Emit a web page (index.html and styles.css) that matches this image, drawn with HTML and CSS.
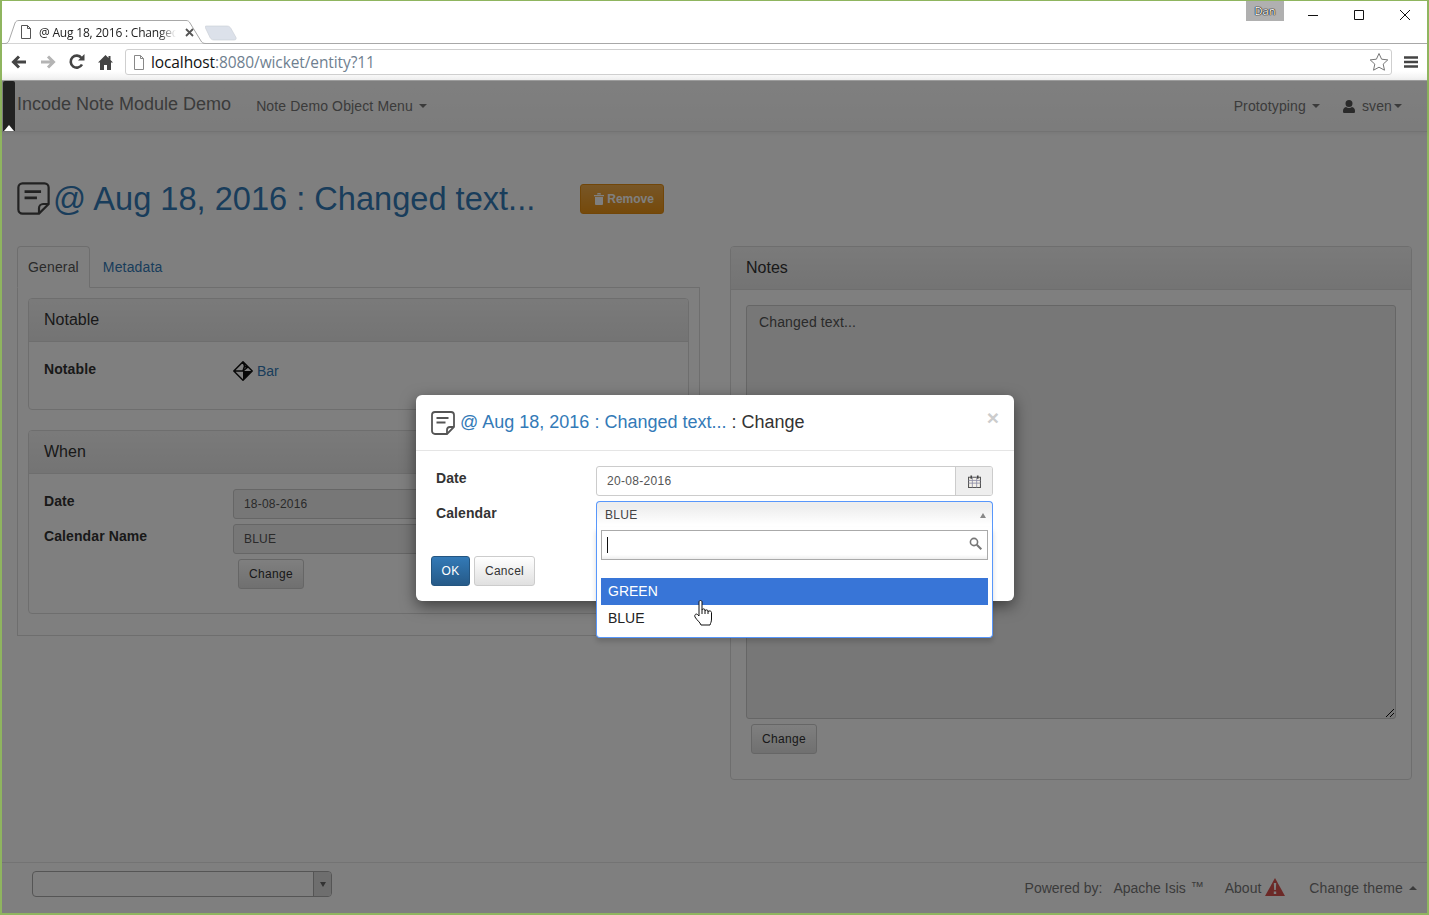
FILE: index.html
```html
<!DOCTYPE html>
<html lang="en">
<head>
<meta charset="utf-8">
<title>@ Aug 18, 2016 : Changed text...</title>
<link rel="stylesheet" href="styles.css">
</head>
<body>
<div class="window">
  <header class="chrome">
    <div class="tabstrip">
      <div class="browser-tab">
        <svg class="tab-shape" width="204" height="24" viewBox="0 0 204 24"><path d="M0 23.500h3c2 0 3-1 4-3L13 3c.7-1.700 2-2.500 4-2.500h167c2 0 3 .8 4 2.500l11 18c1 1.700 2 2.500 5 2.500" fill="#fff" stroke="#a8a8a8"/></svg>
        <svg class="page-icon" width="12" height="14" viewBox="0 0 12 14"><path d="M1.500.5h6l3 3v10h-9z M7.500.5v3h3" fill="#fff" stroke="#555"/></svg>
        <span class="tab-title">@ Aug 18, 2016 : Changed text...</span>
        <svg class="tab-close" width="9" height="9" viewBox="0 0 9 9"><path d="M1 1l7 7M8 1L1 8" stroke="#555" stroke-width="1.800"/></svg>
      </div>
      <svg class="new-tab" width="32" height="16" viewBox="0 0 32 16"><path d="M1 1h21c2 0 3 1 4 2.500l5 9c.5 1.500 0 2.500-2 2.500H9c-2 0-3-1-4-2.500L.5 3C0 2 0 1 1 1z" fill="#dce1ea" stroke="#c8ccd4" stroke-width=".6"/></svg>
      <div class="win-controls">
        <span class="user-badge">Dan</span>
        <span class="win-btn"><svg width="12" height="12" viewBox="0 0 12 12"><path d="M1 6.500h10" stroke="#111"/></svg></span>
        <span class="win-btn"><svg width="12" height="12" viewBox="0 0 12 12"><path d="M1.500 1.500h9v9h-9z" fill="none" stroke="#111"/></svg></span>
        <span class="win-btn"><svg width="12" height="12" viewBox="0 0 12 12"><path d="M1 1l10 10M11 1L1 11" stroke="#111"/></svg></span>
      </div>
    </div>
    <div class="toolbar">
      <svg class="tool" width="16" height="14" viewBox="0 0 16 14"><path d="M15 7H3M8 1.500L2.500 7 8 12.500" fill="none" stroke="#444" stroke-width="3"/></svg>
      <svg class="tool" width="16" height="14" viewBox="0 0 16 14"><path d="M1 7h12M8 1.500L13.500 7 8 12.500" fill="none" stroke="#b4b4b4" stroke-width="3"/></svg>
      <svg class="tool" width="16" height="16" viewBox="0 0 16 16"><path d="M13 10.500A6 6 0 1 1 12.500 4" fill="none" stroke="#444" stroke-width="2.600"/><path d="M9 6.500h6.500V0z" fill="#444"/></svg>
      <svg class="tool" width="15" height="15" viewBox="0 0 15 15"><path d="M7.500 0L0 7.500h2V15h4v-5h3v5h4V7.500h2L12.500 5V1h-2v2z" fill="#444"/></svg>
      <div class="omnibox">
        <svg width="12" height="15" viewBox="0 0 12 15"><path d="M1.500.5h6l3 3v11h-9z M7.500.5v3h3" fill="#fff" stroke="#888"/></svg>
        <span class="url"><span class="host">localhost</span>:8080/wicket/entity?11</span>
        <svg class="star" width="20" height="20" viewBox="0 0 20 20"><path d="M10 1.500l2.600 5.700 6.200.7-4.600 4.200 1.300 6.100L10 15.200l-5.500 3 1.300-6.100L1.200 7.900l6.200-.7z" fill="#fff" stroke="#777"/></svg>
      </div>
      <svg class="menu-icon" width="14" height="12" viewBox="0 0 14 12"><path d="M0 1.500h14M0 6h14M0 10.500h14" stroke="#444" stroke-width="2.400"/></svg>
    </div>
  </header>

  <div class="page">
    <nav class="navbar">
      <a class="brand">Incode Note Module Demo</a>
      <a class="nav-link">Note Demo Object Menu <i class="caret"></i></a>
      <div class="nav-right">
        <a class="nav-link">Prototyping <i class="caret"></i></a>
        <a class="nav-link user"><svg width="12" height="13" viewBox="0 0 12 13"><path d="M6 0a3.200 3.200 0 0 1 0 7 3.200 3.200 0 0 1 0-7zM1 13c-1 0-1-1-1-2 0-2 1-3.500 3-4 1.800 1.200 4.200 1.200 6 0 2 .5 3 2 3 4 0 1 0 2-1 2z" fill="#555"/></svg> sven<i class="caret caret-tight"></i></a>
      </div>
    </nav>

    <main class="content">
      <div class="title-row">
        <svg class="note-icon" width="33" height="33" viewBox="0 0 24 24"><path d="M4 1h16a3 3 0 0 1 3 3v12l-7 7H4a3 3 0 0 1-3-3V4a3 3 0 0 1 3-3z" fill="none" stroke="#444" stroke-width="1.600"/><path d="M16 23v-4a3 3 0 0 1 3-3h4" fill="none" stroke="#444" stroke-width="1.600"/><path d="M5.500 7h12M5.500 11.500h9" stroke="#444" stroke-width="2"/></svg>
        <h1 class="title">@ Aug 18, 2016 : Changed text...</h1>
        <button class="btn btn-warning"><svg width="10" height="12" viewBox="0 0 10 12"><path d="M0 2h10v1.300H0zM3.500 0h3l.5 1.500H3zM1 4h8v7a1 1 0 0 1-1 1H2a1 1 0 0 1-1-1z" fill="#fff"/></svg> Remove</button>
      </div>

      <div class="columns">
        <section class="left-col">
          <div class="tabs">
            <a class="tab active">General</a>
            <a class="tab">Metadata</a>
          </div>
          <div class="tab-content">
            <div class="panel">
              <div class="panel-heading">Notable</div>
              <div class="panel-body notable-body">
                <div class="field">
                  <label class="field-label">Notable</label>
                  <a class="value-link"><svg width="20" height="20" viewBox="0 0 20 20"><path d="M10 10h9.200L10 19.200z" fill="#111"/><path d="M10 .8L19.200 10 10 19.200.8 10z M.8 10H10M10 .8l1.500 4.200-1.500 5M11.500 5l2.800 1.500-4.300 3.500" fill="none" stroke="#111" stroke-width="1.500" stroke-linejoin="round"/></svg> Bar</a>
                </div>
              </div>
            </div>
            <div class="panel">
              <div class="panel-heading">When</div>
              <div class="panel-body when-body">
                <div class="field field-input">
                  <label class="field-label">Date</label>
                  <input class="input" value="18-08-2016" readonly>
                </div>
                <div class="field field-input">
                  <label class="field-label">Calendar Name</label>
                  <input class="input" value="BLUE" readonly>
                </div>
                <button class="btn btn-default btn-change">Change</button>
              </div>
            </div>
          </div>
        </section>
        <section class="panel notes-panel">
          <div class="panel-heading">Notes</div>
          <div class="panel-body notes-body">
            <div class="textarea">Changed text...<svg class="resize" width="8" height="8" viewBox="0 0 8 8"><path d="M8 0L0 8M8 4L4 8" stroke="#111"/></svg></div>
            <button class="btn btn-default btn-change">Change</button>
          </div>
        </section>
      </div>
    </main>

    <footer class="footer">
      <div class="footer-select"><span class="footer-arrow"><i class="caret"></i></span></div>
      <div class="footer-right">
        <span class="powered">Powered by:</span>
        <a class="foot-link isis">Apache Isis <sup>™</sup></a>
        <a class="foot-link about">About <svg width="20" height="18" viewBox="0 0 20 18"><path d="M10 0l10 18H0z" fill="#d9534f"/><path d="M8.800 5h2.400l-.4 7H9.200zM8.800 13.500h2.400V16H8.800z" fill="#fff"/></svg></a>
        <a class="foot-link theme">Change theme <i class="caret caret-up"></i></a>
      </div>
    </footer>

    <div class="backdrop"></div>
    <div class="side-handle"><i class="handle-tip"></i></div>
  </div>

  <div class="modal">
    <div class="modal-header">
      <svg class="modal-note" width="24" height="24" viewBox="0 0 24 24"><path d="M4 1h16a3 3 0 0 1 3 3v12l-7 7H4a3 3 0 0 1-3-3V4a3 3 0 0 1 3-3z" fill="none" stroke="#555" stroke-width="1.800"/><path d="M16 23v-4a3 3 0 0 1 3-3h4" fill="none" stroke="#555" stroke-width="1.800"/><path d="M5.500 7h12M5.500 11.500h9" stroke="#555" stroke-width="2"/></svg>
      <h4 class="modal-title"><a>@ Aug 18, 2016 : Changed text...</a> : Change</h4>
      <span class="close">×</span>
    </div>
    <div class="modal-body">
      <div class="modal-field">
        <label class="field-label">Date</label>
        <div class="input-group">
          <span class="group-value">20-08-2016</span>
          <span class="addon"><svg width="13" height="13" viewBox="0 0 12 12"><path d="M.5 2h11v9.500H.5z" fill="#f4f1ea" stroke="#555"/><path d="M.5 5h11M.5 7.500h11M4 2v9.500M8 2v9.500" stroke="#8f8fa8" stroke-width=".8"/><path d="M3 .5v3M9 .5v3" stroke="#444" stroke-width="1.500"/></svg></span>
        </div>
      </div>
      <div class="modal-field">
        <label class="field-label">Calendar</label>
        <div class="select-open">BLUE<i class="select-arrow"></i></div>
      </div>
    </div>
    <div class="modal-footer">
      <button class="btn btn-primary">OK</button>
      <button class="btn btn-default">Cancel</button>
    </div>
  </div>

  <div class="dropdown">
    <div class="search">
      <i class="text-cursor"></i>
      <svg width="13" height="13" viewBox="0 0 13 13"><circle cx="5" cy="5" r="3.600" fill="none" stroke="#777" stroke-width="1.600"/><path d="M7.800 7.800l4.500 4.500" stroke="#777" stroke-width="2"/></svg>
    </div>
    <ul class="options">
      <li class="option highlighted">GREEN</li>
      <li class="option">BLUE</li>
    </ul>
  </div>

  <svg class="hand" width="19" height="26" viewBox="0 0 19 26"><path d="M5 14V2C5 0 8 0 8 2v8c0-1.500 3-1.500 3 0v1c0-1.500 3-1.500 3 0v1c0-1.500 3.500-1.500 3.500.5V19c0 3-1 4-1.500 6H7c-1-3-4-4.500-6-8-1-2.500 1.500-4 3-2l1 1z" fill="#fff" stroke="#111" stroke-linejoin="round"/><path d="M8 10v4M11 11v3M14 12v2" stroke="#111" fill="none"/></svg>
</div>
</body>
</html>
```

FILE: styles.css
```css
* { box-sizing: border-box; }
html, body { margin: 0; height: 100%; overflow: hidden; }
body {
  font-family: "Liberation Sans", Arial, sans-serif;
  font-size: 14px;
  color: #333;
  background: #fff;
}
a { color: inherit; text-decoration: none; }
h1, h4 { margin: 0; font-weight: 400; }
.window {
  position: relative;
  width: 1429px;
  height: 915px;
  display: flex;
  flex-direction: column;
  border: 2px solid #8fb55f;
  border-top-width: 1px;
}

/* browser chrome */
.chrome { flex: none; height: 80px; background: #fff; }
.tabstrip { height: 43px; display: flex; align-items: flex-end; border-bottom: 1px solid #a8a8a8; position: relative; }
.browser-tab {
  position: relative;
  width: 204px;
  height: 24px;
  margin-bottom: -1px;
  display: flex;
  align-items: center;
  padding-left: 18px;
  flex: none;
}
.tab-shape { position: absolute; left: 0; top: 0; }
.page-icon { position: relative; margin-right: 7px; }
.tab-title {
  position: relative;
  width: 137px;
  overflow: hidden;
  white-space: nowrap;
  font: 12px "Open Sans", sans-serif;
  letter-spacing: -.2px;
  color: #222;
  -webkit-mask-image: linear-gradient(90deg, #000 88%, transparent);
  mask-image: linear-gradient(90deg, #000 88%, transparent);
}
.tab-close { position: relative; margin-left: 9px; }
.new-tab { flex: none; margin: 0 0 2px -1px; }
.win-controls { margin-left: auto; margin-right: -1px; align-self: flex-start; display: flex; align-items: flex-start; }
.user-badge {
  width: 38px;
  height: 20px;
  margin-right: 6px;
  background: #b0b0b0;
  color: #fff;
  font: 11px "Open Sans", sans-serif;
  text-align: center;
  line-height: 19px;
  text-shadow: 0 0 1px #000, 0 0 1px #000, 0 0 1px #000;
}
.win-btn { width: 46px; height: 28px; display: flex; align-items: center; justify-content: center; }
.toolbar {
  height: 37px;
  display: flex;
  align-items: center;
  background: linear-gradient(#fff 75%, #efefef);
  padding: 0 9px 0 9px;
  border-bottom: 1px solid #a0a0a0;
}
.tool { flex: none; margin-right: 13px; }
.omnibox {
  flex: 1;
  height: 26px;
  margin: 0 12px 0 -1px;
  display: flex;
  align-items: center;
  padding: 0 0 0 7px;
  background: #fff;
  border: 1px solid #cfcfcf;
  border-radius: 3px;
}
.url { font: 15.500px "Open Sans", sans-serif; color: #6f7f90; margin-left: 6px; flex: 1; letter-spacing: -.1px; }
.host { color: #111; }
.star { margin-right: 2px; }
.menu-icon { flex: none; }

/* page */
.page { position: relative; flex: 1; display: flex; flex-direction: column; background: #fff; min-height: 0; }
.backdrop { position: absolute; inset: 0; background: rgba(0, 0, 0, .5); }
.side-handle {
  position: absolute;
  left: 1px;
  top: 0;
  width: 12px;
  height: 50px;
  background: #222;
  border-radius: 2px 2px 0 0;
}
.handle-tip {
  position: absolute;
  left: 1px;
  bottom: 0;
  border: 5px solid transparent;
  border-top: 0;
  border-bottom: 6px solid #fff;
}
.navbar {
  flex: none;
  height: 51px;
  display: flex;
  align-items: center;
  padding: 0 25px 0 15px;
  background: linear-gradient(#fff, #f8f8f8);
  border-bottom: 1px solid #e7e7e7;
  box-shadow: 0 1px 5px rgba(0, 0, 0, .08);
  color: #777;
}
.brand { font-size: 18px; margin-right: 25px; position: relative; top: -2px; }
.nav-right { margin-left: auto; display: flex; gap: 23px; }
.nav-link { display: inline-flex; align-items: center; letter-spacing: .13px; }
.nav-link .caret { margin-left: 6px; }
.nav-link .caret-tight { margin-left: 2px; }
.user svg { margin-right: 7px; }
.caret { display: inline-block; border: 4px solid transparent; border-top-color: currentColor; border-bottom: 0; }
.caret-up { border-top: 0; border-bottom: 4px solid currentColor; vertical-align: middle; margin-left: 3px; }

.content { flex: 1; padding: 49px 15px 0; min-height: 0; }
.title-row { display: flex; align-items: center; height: 35px; margin-bottom: 30px; }
.note-icon { margin-right: 4px; flex: none; }
.title { font-size: 32.600px; color: #337ab7; white-space: nowrap; margin-left: -1px; }
.title-row .btn-warning { margin-left: 45px; }

.btn {
  font: 12px "Liberation Sans", sans-serif;
  height: 30px;
  padding: 0 11px;
  border-radius: 3px;
  border: 1px solid #ccc;
  letter-spacing: .3px;
}
.btn-warning {
  display: inline-flex;
  align-items: center;
  gap: 3px;
  white-space: nowrap;
  color: #fff;
  font-weight: 700;
  background: linear-gradient(#f0ad4e, #eb9316);
  border-color: #e38d13;
  padding: 0 0 0 13px;
  width: 84px;
  letter-spacing: 0;
}
.btn-default { color: #333; background: linear-gradient(#fff, #e0e0e0); border-color: #ccc; }
.btn-primary { color: #fff; background: linear-gradient(#337ab7, #265a88); border-color: #245580; }

.columns { display: grid; grid-template-columns: 683px 682px; column-gap: 30px; align-items: start; }
.tabs { display: flex; height: 42px; margin-bottom: -1px; position: relative; }
.tab { padding: 0 10px; line-height: 40px; color: #337ab7; border: 1px solid transparent; letter-spacing: .15px; }
.tab + .tab { margin-left: 2px; }
.tab.active { color: #555; background: #fff; border: 1px solid #ddd; border-bottom-color: #fff; border-radius: 4px 4px 0 0; }
.tab-content { border: 1px solid #ddd; padding: 10px; height: 349px; display: flex; flex-direction: column; gap: 20px; background: #fff; }
.panel { border: 1px solid #ddd; border-radius: 4px; background: #fff; }
.panel-heading {
  height: 43px;
  line-height: 42px;
  padding: 0 15px;
  font-size: 16px;
  color: #333;
  background: linear-gradient(#f5f5f5, #e8e8e8);
  border-bottom: 1px solid #ddd;
  border-radius: 3px 3px 0 0;
}
.panel-body { padding: 14px 15px 24px; }
.when-body { padding-top: 15px; }
.notable-body { height: 67px; }
.field { display: grid; grid-template-columns: 189px 1fr; align-items: start; }
.field-input { margin-bottom: 5px; }
.field-label { font-weight: 700; letter-spacing: .1px; padding-top: 5px; display: block; }
.field-input .field-label { padding-top: 4px; }
.value-link { display: inline-flex; align-items: center; gap: 4px; color: #337ab7; padding-top: 5px; }
.input {
  width: 440px;
  height: 30px;
  font: 12px "Liberation Sans", sans-serif;
  letter-spacing: .2px;
  padding: 0 10px;
  color: #555;
  background: #eee;
  border: 1px solid #ccc;
  border-radius: 3px;
}
.btn-change { margin-left: 194px; height: 30px; width: 66px; padding: 0; }
.notes-panel { height: 534px; }
.notes-body { padding: 15px; }
.textarea {
  position: relative;
  height: 414px;
  padding: 8px 12px;
  color: #555;
  background: #eee;
  border: 1px solid #ccc;
  border-radius: 3px;
  letter-spacing: .14px;
}
.resize { position: absolute; right: 1px; bottom: 1px; }
.notes-body .btn-change { margin: 5px 0 0 5px; display: block; }

.footer {
  flex: none;
  height: 51px;
  display: flex;
  align-items: center;
  padding: 0 10px 0 30px;
  background: #fff;
  border-top: 1px solid #e7e7e7;
  color: #777;
}
.footer-select {
  width: 300px;
  height: 26px;
  display: flex;
  justify-content: flex-end;
  background: #fff;
  border: 1px solid #aaa;
  border-radius: 4px;
  position: relative;
  top: -4px;
}
.footer-arrow { width: 18px; display: flex; align-items: center; justify-content: center; border-left: 1px solid #aaa; background: #ddd; color: #666; border-radius: 0 3px 3px 0; }
.footer-arrow .caret { border-width: 3px; border-top-width: 5px; border-bottom: 0; }
.footer-right { margin-left: auto; display: flex; align-items: center; }
.powered { margin-right: 11px; }
.foot-link { display: inline-flex; align-items: center; }
.isis { margin-right: 21px; }
.isis sup { font-size: 13px; margin-left: 5px; position: relative; top: -2px; line-height: 1; }
.about { margin-right: 24px; gap: 4px; }
.about svg { position: relative; top: -1px; }
.theme { letter-spacing: .15px; }
.foot-link .caret { margin-left: 6px; }

/* modal */
.modal {
  position: absolute;
  left: 414px;
  top: 394px;
  width: 598px;
  height: 206px;
  background: #fff;
  border-radius: 6px;
  box-shadow: 0 5px 15px rgba(0, 0, 0, .5);
}
.modal-header {
  height: 56px;
  display: flex;
  align-items: center;
  padding: 0 15px;
  border-bottom: 1px solid #e5e5e5;
  position: relative;
}
.modal-note { margin-right: 5px; flex: none; }
.modal-title { font-size: 18px; color: #333; white-space: nowrap; }
.modal-title a { color: #337ab7; }
.close {
  position: absolute;
  right: 15px;
  top: 12px;
  font-size: 21px;
  line-height: 1;
  font-weight: 700;
  color: #ccc;
}
.modal-body { padding: 15px 21px 0 20px; }
.modal-field { display: grid; grid-template-columns: 160px 397px; margin-bottom: 5px; }
.modal-field .field-label { padding-top: 4px; }
.input-group { height: 30px; display: flex; border: 1px solid #ccc; border-radius: 3px; }
.group-value { flex: 1; padding: 0 10px; line-height: 28px; font-size: 12px; letter-spacing: .3px; color: #555; }
.addon { width: 37px; display: flex; align-items: center; justify-content: center; background: #eee; border-left: 1px solid #ccc; border-radius: 0 2px 2px 0; }
.select-open {
  height: 26px;
  position: relative;
  padding: 0 8px;
  line-height: 27px;
  font-size: 12px;
  letter-spacing: .3px;
  color: #444;
  background: linear-gradient(#eee 20%, #fff 90%);
  border: 1px solid #5897fb;
  border-bottom: 0;
  border-radius: 4px 4px 0 0;
}
.select-arrow { position: absolute; right: 6px; top: 11px; border: 3px solid transparent; border-top: 0; border-bottom: 5px solid #888; }
.modal-footer { padding: 24px 15px 0; display: flex; gap: 4px; }
.modal-footer .btn { height: 30px; }
.modal-footer .btn-primary { width: 39px; padding: 0; }
.modal-footer .btn-default { width: 61px; padding: 0; }

/* open select */
.dropdown {
  position: absolute;
  left: 594px;
  top: 526px;
  width: 397px;
  height: 111px;
  padding: 3px 4px 0;
  background: #fff;
  border: 1px solid #5897fb;
  border-top: 0;
  border-radius: 0 0 4px 4px;
  box-shadow: 0 4px 5px rgba(0, 0, 0, .15);
}
.search {
  height: 30px;
  display: flex;
  align-items: center;
  justify-content: space-between;
  padding: 0 5px 4px 5px;
  background: linear-gradient(#fff 85%, #eee);
  border: 1px solid #aaa;
}
.text-cursor { width: 1px; height: 16px; background: #111; position: relative; top: 2px; }
.options { list-style: none; margin: 18px 0 0; padding: 0; }
.option { height: 27px; line-height: 27px; padding: 0 7px; color: #222; }
.highlighted { background: #3875d7; color: #fff; }
.hand { position: absolute; left: 692px; top: 599px; }
```
